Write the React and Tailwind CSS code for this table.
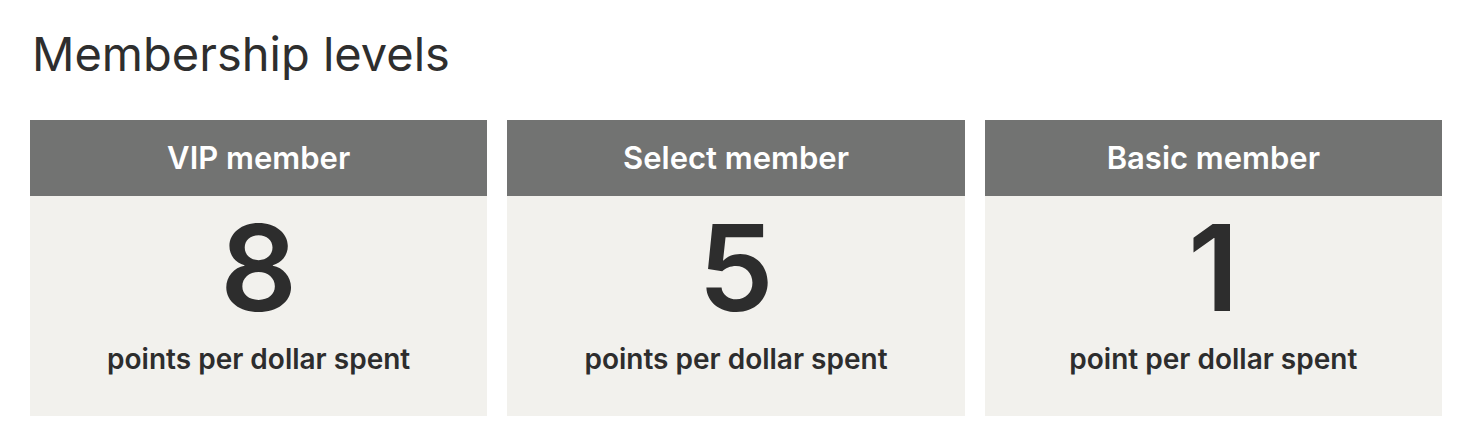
import React from "react";

const levels = [
  { name: "VIP member", points: "8", label: "points per dollar spent" },
  { name: "Select member", points: "5", label: "points per dollar spent" },
  { name: "Basic member", points: "1", label: "point per dollar spent" },
];

function LevelCard({ name, points, label }) {
  return (
    <div className="flex flex-col">
      <div className="h-[76px] bg-[#727372] flex items-center justify-center">
        <span className="text-[31px] leading-[36px] font-semibold text-white">{name}</span>
      </div>
      <div className="bg-[#f2f1ed] flex flex-col items-center pt-3 pb-10 text-[#2d2d2d]">
        <div className="text-[120px] leading-none font-semibold">{points}</div>
        <div className="mt-[14px] text-[28px] leading-[34px] font-semibold">{label}</div>
      </div>
    </div>
  );
}

export default function App() {
  return (
    <div
      className="min-h-screen bg-white pt-6 pl-[30px] pr-[38px]"
      style={{ fontFamily: 'Inter, "Liberation Sans", Arial, sans-serif' }}
    >
      <h1 className="text-[47px] leading-[60px] text-[#2e2e2e] pl-[2px] mb-9">
        Membership levels
      </h1>
      <div className="grid grid-cols-3 gap-5">
        {levels.map((l) => (
          <LevelCard key={l.name} {...l} />
        ))}
      </div>
    </div>
  );
}
